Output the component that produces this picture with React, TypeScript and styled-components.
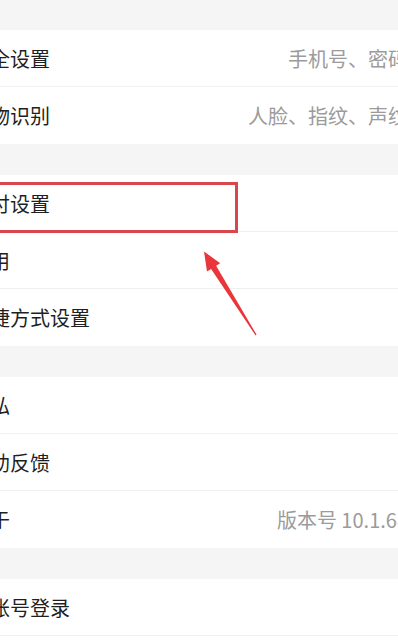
import styled, { createGlobalStyle } from 'styled-components'

const GlobalStyle = createGlobalStyle`
    html, body {
        margin: 0;
        padding: 0;
        background: #ffffff;
        overflow: hidden;
    }
    * {
        box-sizing: border-box;
    }
`

type Item = { label: string; value?: string }

const GROUPS: Item[][] = [
    [
        { label: '安全设置', value: '手机号、密码' },
        { label: '生物识别', value: '人脸、指纹、声纹' },
    ],
    [{ label: '支付设置' }, { label: '通用' }, { label: '快捷方式设置' }],
    [{ label: '隐私' }, { label: '帮助反馈' }, { label: '关于', value: '版本号 10.1.68' }],
    [{ label: '换账号登录' }, { label: '' }],
]

export default function App() {
    return (
        <>
            <GlobalStyle />
            <Screen>
                <List>
                    {GROUPS.map((group, gi) => (
                        <Group key={gi}>
                            {group.map((item, i) => (
                                <Row key={item.label + i} divider={i < group.length - 1 || gi === GROUPS.length - 1}>
                                    <Label>{item.label}</Label>
                                    {item.value && <Value>{item.value}</Value>}
                                </Row>
                            ))}
                        </Group>
                    ))}
                </List>
                <Highlight />
                <Arrow viewBox="0 0 398 642" width={398} height={642}>
                    <polygon points="204,251.5 220.2,263.2 216.1,265.7 256.5,334.6 255.6,335.4 211.1,268.9 207,271.4" />
                </Arrow>
            </Screen>
        </>
    )
}

const Screen = styled.div`
    position: relative;
    width: 398px;
    height: 642px;
    overflow: hidden;
    background: #f5f5f5;
    font-family: 'Noto Sans CJK SC', 'Noto Sans', sans-serif;
`

const List = styled.div`
    width: 468px;
    margin-left: -45px;
    padding-top: 30px;
    display: flex;
    flex-direction: column;
    gap: 31px;
`

const Group = styled.div`
    display: flex;
    flex-direction: column;
    background: #ffffff;
`

const Row = styled.div<{ divider: boolean }>`
    height: 57px;
    padding: 0 15px;
    display: flex;
    align-items: center;
    justify-content: space-between;
    border-bottom: 1px solid ${({ divider }) => (divider ? '#f0f0f0' : 'transparent')};
`

const Label = styled.span`
    font-size: 20px;
    color: #1f1f1f;
    white-space: nowrap;
`

const Value = styled.span`
    font-size: 20px;
    color: #9b9b9b;
    white-space: nowrap;
`

const Highlight = styled.div`
    position: absolute;
    left: -10px;
    top: 182px;
    width: 248px;
    height: 51px;
    border: 3px solid #d8474b;
`

const Arrow = styled.svg`
    position: absolute;
    left: 0;
    top: 0;
    pointer-events: none;
    fill: #e8363b;
`
